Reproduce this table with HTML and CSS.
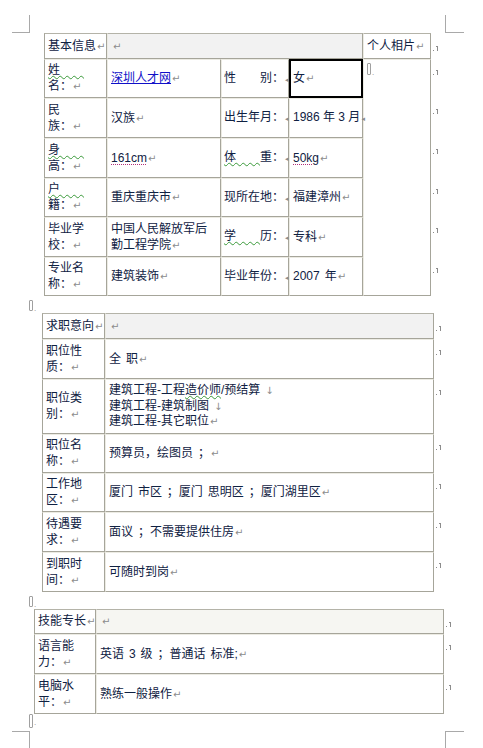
FILE: index.html
```html
<!DOCTYPE html>
<html lang="zh-CN">
<head>
<meta charset="utf-8">
<title>个人简历</title>
<link rel="stylesheet" href="styles.css">
</head>
<body>
<div class="page">
  <div class="marks marks-top">
    <span class="corner corner-tl"></span>
    <span class="corner corner-tr"></span>
  </div>

  <table class="resume t1">
    <colgroup><col class="w63"><col class="w114"><col class="w68"><col class="w74"><col class="w68"><col class="weor"></colgroup>
    <tr class="h26">
      <td class="first top lab">基本信息<i class="pm">↵</i></td>
      <td class="top shade blank" colspan="3"><i class="pm">↵</i></td>
      <td class="top lab">个人相片<i class="pm">↵</i></td>
      <td class="eor eor-head"><svg class="eormk" width="6" height="7" viewBox="0 0 6 7"><rect x="0" y="5" width="1" height="1"/><rect x="4" y="1" width="1" height="5"/><rect x="3" y="1" width="1" height="1"/></svg></td>
    </tr>
    <tr class="h39">
      <td class="first lab"><span class="wv">姓　　</span><br>名：<i class="pm">↵</i></td>
      <td class="val"><a class="lnk">深圳人才网</a><i class="pm">↵</i></td>
      <td class="lab3">性　　别：<i class="ar">◂</i></td>
      <td class="val sel">女<i class="pm">↵</i></td>
      <td class="photo" rowspan="6"><span class="pbox"></span><span class="pdot">.</span></td>
      <td class="eor"><svg class="eormk" width="6" height="7" viewBox="0 0 6 7"><rect x="0" y="5" width="1" height="1"/><rect x="4" y="1" width="1" height="5"/><rect x="3" y="1" width="1" height="1"/></svg></td>
    </tr>
    <tr class="h40">
      <td class="first lab">民<br>族：<i class="pm">↵</i></td>
      <td class="val">汉族<i class="pm">↵</i></td>
      <td class="lab3">出生年月：<i class="ar">◂</i></td>
      <td class="val tight">1986 年 3 月<i class="ar">◂</i></td>
      <td class="eor"><svg class="eormk" width="6" height="7" viewBox="0 0 6 7"><rect x="0" y="5" width="1" height="1"/><rect x="4" y="1" width="1" height="5"/><rect x="3" y="1" width="1" height="1"/></svg></td>
    </tr>
    <tr class="h40">
      <td class="first lab"><span class="wv">身　　</span><br>高：<i class="pm">↵</i></td>
      <td class="val"><span class="dt">161cm</span><i class="pm">↵</i></td>
      <td class="lab3"><span class="wv">体　　</span>重：<i class="ar">◂</i></td>
      <td class="val"><span class="dt">50kg</span><i class="pm">↵</i></td>
      <td class="eor"><svg class="eormk" width="6" height="7" viewBox="0 0 6 7"><rect x="0" y="5" width="1" height="1"/><rect x="4" y="1" width="1" height="5"/><rect x="3" y="1" width="1" height="1"/></svg></td>
    </tr>
    <tr class="h39">
      <td class="first lab"><span class="wv">户　　</span><br>籍：<i class="pm">↵</i></td>
      <td class="val">重庆重庆市<i class="pm">↵</i></td>
      <td class="lab3">现所在地：<i class="ar">◂</i></td>
      <td class="val">福建漳州<i class="pm">↵</i></td>
      <td class="eor"><svg class="eormk" width="6" height="7" viewBox="0 0 6 7"><rect x="0" y="5" width="1" height="1"/><rect x="4" y="1" width="1" height="5"/><rect x="3" y="1" width="1" height="1"/></svg></td>
    </tr>
    <tr class="h40">
      <td class="first lab">毕业学<br>校：<i class="pm">↵</i></td>
      <td class="val">中国人民解放军后<br>勤工程学院<i class="pm">↵</i></td>
      <td class="lab3"><span class="wv">学　　</span>历：<i class="ar">◂</i></td>
      <td class="val">专科<i class="pm">↵</i></td>
      <td class="eor"><svg class="eormk" width="6" height="7" viewBox="0 0 6 7"><rect x="0" y="5" width="1" height="1"/><rect x="4" y="1" width="1" height="5"/><rect x="3" y="1" width="1" height="1"/></svg></td>
    </tr>
    <tr class="h39">
      <td class="first lab">专业名<br>称：<i class="pm">↵</i></td>
      <td class="val">建筑装饰<i class="pm">↵</i></td>
      <td class="lab3">毕业年份：<i class="ar">◂</i></td>
      <td class="val">2007 年<i class="pm">↵</i></td>
      <td class="eor"><svg class="eormk" width="6" height="7" viewBox="0 0 6 7"><rect x="0" y="5" width="1" height="1"/><rect x="4" y="1" width="1" height="5"/><rect x="3" y="1" width="1" height="1"/></svg></td>
    </tr>
  </table>

  <div class="para"><span class="pbox"></span><span class="pdot">.</span></div>

  <table class="resume t2">
    <colgroup><col class="w63"><col class="w329"><col class="weor"></colgroup>
    <tr class="h26">
      <td class="first top lab">求职意向<i class="pm">↵</i></td>
      <td class="top shade blank"><i class="pm">↵</i></td>
      <td class="eor eor-head"><svg class="eormk" width="6" height="7" viewBox="0 0 6 7"><rect x="0" y="5" width="1" height="1"/><rect x="4" y="1" width="1" height="5"/><rect x="3" y="1" width="1" height="1"/></svg></td>
    </tr>
    <tr class="h40">
      <td class="first lab">职位性<br>质：<i class="pm">↵</i></td>
      <td class="val">全 职<i class="pm">↵</i></td>
      <td class="eor"><svg class="eormk" width="6" height="7" viewBox="0 0 6 7"><rect x="0" y="5" width="1" height="1"/><rect x="4" y="1" width="1" height="5"/><rect x="3" y="1" width="1" height="1"/></svg></td>
    </tr>
    <tr class="h55">
      <td class="first lab">职位类<br>别：<i class="pm">↵</i></td>
      <td class="val lines">建筑工程-工程<span class="wv">造价师</span>/预结算 <i class="br">↓</i><br>建筑工程-建筑制图 <i class="br">↓</i><br>建筑工程-其它职位<i class="pm">↵</i></td>
      <td class="eor"><svg class="eormk" width="6" height="7" viewBox="0 0 6 7"><rect x="0" y="5" width="1" height="1"/><rect x="4" y="1" width="1" height="5"/><rect x="3" y="1" width="1" height="1"/></svg></td>
    </tr>
    <tr class="h39">
      <td class="first lab">职位名<br>称：<i class="pm">↵</i></td>
      <td class="val">预算员，绘图员 ；<i class="pm">↵</i></td>
      <td class="eor"><svg class="eormk" width="6" height="7" viewBox="0 0 6 7"><rect x="0" y="5" width="1" height="1"/><rect x="4" y="1" width="1" height="5"/><rect x="3" y="1" width="1" height="1"/></svg></td>
    </tr>
    <tr class="h39">
      <td class="first lab">工作地<br>区：<i class="pm">↵</i></td>
      <td class="val">厦门 市区 ；厦门 思明区 ；厦门湖里区<i class="pm">↵</i></td>
      <td class="eor"><svg class="eormk" width="6" height="7" viewBox="0 0 6 7"><rect x="0" y="5" width="1" height="1"/><rect x="4" y="1" width="1" height="5"/><rect x="3" y="1" width="1" height="1"/></svg></td>
    </tr>
    <tr class="h40">
      <td class="first lab">待遇要<br>求：<i class="pm">↵</i></td>
      <td class="val">面议 ；不需要提供住房<i class="pm">↵</i></td>
      <td class="eor"><svg class="eormk" width="6" height="7" viewBox="0 0 6 7"><rect x="0" y="5" width="1" height="1"/><rect x="4" y="1" width="1" height="5"/><rect x="3" y="1" width="1" height="1"/></svg></td>
    </tr>
    <tr class="h40">
      <td class="first lab">到职时<br>间：<i class="pm">↵</i></td>
      <td class="val">可随时到岗<i class="pm">↵</i></td>
      <td class="eor"><svg class="eormk" width="6" height="7" viewBox="0 0 6 7"><rect x="0" y="5" width="1" height="1"/><rect x="4" y="1" width="1" height="5"/><rect x="3" y="1" width="1" height="1"/></svg></td>
    </tr>
  </table>

  <div class="para"><span class="pbox"></span><span class="pdot">.</span></div>

  <table class="resume t3">
    <colgroup><col class="w62"><col class="w348"><col class="weor"></colgroup>
    <tr class="h25">
      <td class="first top lab">技能专长<i class="pm">↵</i></td>
      <td class="top shade2 blank"><i class="pm">↵</i></td>
      <td class="eor eor-head"><svg class="eormk" width="6" height="7" viewBox="0 0 6 7"><rect x="0" y="5" width="1" height="1"/><rect x="4" y="1" width="1" height="5"/><rect x="3" y="1" width="1" height="1"/></svg></td>
    </tr>
    <tr class="h40">
      <td class="first lab">语言能<br>力：<i class="pm">↵</i></td>
      <td class="val">英语 3 级 ；普通话 标准;<i class="pm">↵</i></td>
      <td class="eor"><svg class="eormk" width="6" height="7" viewBox="0 0 6 7"><rect x="0" y="5" width="1" height="1"/><rect x="4" y="1" width="1" height="5"/><rect x="3" y="1" width="1" height="1"/></svg></td>
    </tr>
    <tr class="h40">
      <td class="first lab">电脑水<br>平：<i class="pm">↵</i></td>
      <td class="val">熟练一般操作<i class="pm">↵</i></td>
      <td class="eor"><svg class="eormk" width="6" height="7" viewBox="0 0 6 7"><rect x="0" y="5" width="1" height="1"/><rect x="4" y="1" width="1" height="5"/><rect x="3" y="1" width="1" height="1"/></svg></td>
    </tr>
  </table>

  <div class="para para-last"><span class="pbox pbox-tall"></span><span class="pdot">.</span></div>

  <div class="marks marks-bottom">
    <span class="corner corner-bl"></span>
    <span class="corner corner-br"></span>
  </div>
</div>
</body>
</html>
```

FILE: styles.css
```css
* { box-sizing: border-box; }

html, body {
  margin: 0;
  padding: 0;
  background: #ffffff;
}

body {
  font-family: "Liberation Sans", "Noto Sans CJK SC", sans-serif;
  font-size: 12px;
  line-height: 16px;
  color: #0f2142;
  word-spacing: 1.6px;
}

.page {
  width: 483px;
  height: 748px;
  overflow: hidden;
}

/* crop marks */
.marks { display: flex; }
.marks-top { height: 33px; align-items: flex-end; }
.marks-bottom { height: 17px; align-items: flex-start; }
.corner { display: block; border: 0 solid #a9a9a9; }
.corner-tl { width: 18px; height: 18px; margin-left: 12px; border-right-width: 1px; border-bottom-width: 1px; }
.corner-tr { width: 19px; height: 18px; margin-left: auto; margin-right: 19px; border-left-width: 1px; border-bottom-width: 1px; }
.corner-bl { width: 18px; height: 17px; margin-left: 12px; border-right-width: 1px; border-top-width: 1px; }
.corner-br { width: 19px; height: 17px; margin-left: auto; margin-right: 19px; border-left-width: 1px; border-top-width: 1px; }

/* paragraph marks between tables */
.para { height: 17px; padding: 4px 0 0 29px; display: flex; align-items: flex-start; }
.para-last { padding-top: 0; }
.pbox {
  display: inline-block;
  width: 4px;
  height: 11px;
  border: 1px solid #a0a0a0;
  border-radius: 1px;
}
.pbox-tall { height: 14px; }
.pdot {
  display: inline-block;
  font-size: 8px;
  line-height: 8px;
  color: #8a8a8a;
  margin-left: 1px;
  margin-top: 5px;
}

/* tables */
.resume {
  border-collapse: separate;
  border-spacing: 0;
  table-layout: fixed;
}
.t1 { width: 407px; margin-left: 44px; }
.t2 { width: 412px; margin-left: 42px; }
.t3 { width: 430px; margin-left: 34px; }

.w62 { width: 62px; }
.w63 { width: 63px; }
.w68 { width: 68px; }
.w74 { width: 74px; }
.w114 { width: 114px; }
.w329 { width: 329px; }
.w348 { width: 348px; }
.weor { width: 20px; }

.h25 { height: 25px; }
.h26 { height: 26px; }
.h39 { height: 39px; }
.h40 { height: 40px; }
.h55 { height: 55px; }

.resume td {
  padding: 0 2px 0 3px;
  vertical-align: middle;
  border-style: solid;
  border-width: 1px;
  border-color: #ecebe3 #a6a59a #a6a59a #ecebe3;
  background: #ffffff;
  white-space: nowrap;
}
.resume td.top { border-top-color: #b4b3a8; }
.resume td.first { border-left-color: #a6a59a; }
.resume td.shade { background: #f2f2f2; }
.resume td.shade2 { background: #f6f6f2; }
.resume td.blank { padding-left: 4px; }

.resume td.lab3 { text-align: right; padding: 0 1px 0 2px; }
.resume td.tight { word-spacing: 0; padding-right: 0; }
.resume td.sel {
  border-color: #000000;
  box-shadow: inset 0 0 0 1px #000000;
}
.resume td.photo { vertical-align: top; padding: 3px 0 0 3px; }
.resume td.photo .pbox { height: 12px; }

.resume td.eor {
  border: none;
  background: transparent;
  vertical-align: top;
  padding: 10px 0 0 2px;
  line-height: 8px;
}
.resume td.eor-head { padding-top: 12px; }
.eormk { display: block; fill: #8c8c8c; }

.lines { line-height: 15.5px; }

/* inline markers */
.pm {
  font-family: "DejaVu Sans", sans-serif;
  font-style: normal;
  font-size: 10px;
  color: #8c8c8c;
  margin-left: 1px;
  word-spacing: 0;
}
.ar {
  font-family: "DejaVu Sans", sans-serif;
  font-style: normal;
  font-size: 7px;
  color: #8c8c8c;
  margin-left: 1px;
}
.br {
  font-family: "DejaVu Sans", sans-serif;
  font-style: normal;
  font-size: 10px;
  color: #8c8c8c;
}

.lnk {
  color: #1010c8;
  text-decoration: underline;
}
.wv {
  white-space: pre;
  text-decoration: underline wavy #3a9a3a;
  text-decoration-thickness: 1px;
  text-underline-offset: 1px;
}
.dt {
  text-decoration: underline dotted #b0307a;
  text-underline-offset: 2px;
}
```
